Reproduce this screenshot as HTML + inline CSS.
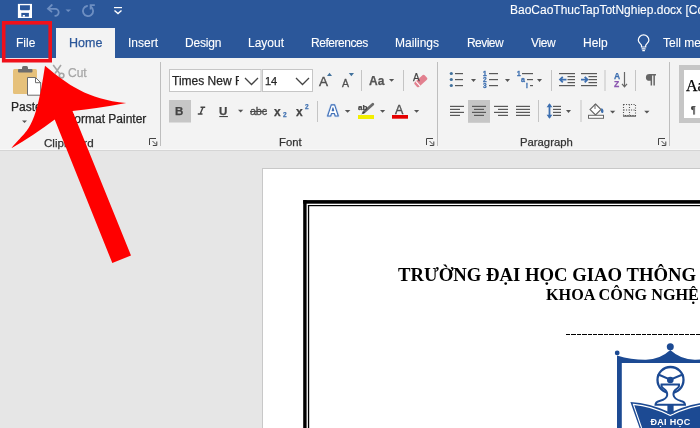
<!DOCTYPE html>
<html><head><meta charset="utf-8">
<style>
*{margin:0;padding:0;box-sizing:border-box}
.t{will-change:transform;-webkit-text-stroke-width:0.25px}
html,body{width:700px;height:428px;overflow:hidden;background:#E6E6E6;position:relative;font-family:"Liberation Sans",sans-serif}
.a{position:absolute}
.t{position:absolute;white-space:nowrap;line-height:1;font-size:12px}
.tab{color:#fff;-webkit-text-stroke-width:0.1px}
.rb{color:#262626}
.sep{position:absolute;width:1px;background:#BEBEBE}
.gl{color:#333;font-size:11.3px}
svg{position:absolute;overflow:visible}
</style></head><body>
<!-- title bar + tabs -->
<div class="a" style="left:0;top:0;width:700px;height:58px;background:#2B579A"></div>
<div class="a" style="left:56px;top:28px;width:59px;height:31px;background:#F3F3F3"></div>
<!-- ribbon -->
<div class="a" style="left:0;top:58px;width:700px;height:92px;background:#F3F3F3"></div>
<div class="a" style="left:0;top:149px;width:700px;height:1px;background:#F8F8F8"></div>
<div class="a" style="left:0;top:150px;width:700px;height:1px;background:#D5D5D5"></div>

<!-- title -->
<div class="t tab" style="left:510px;top:4px">BaoCaoThucTapTotNghiep.docx [Co</div>
<!-- tabs -->
<div class="t tab" style="left:15.5px;top:37px">File</div>
<div class="t" style="left:69px;top:36.7px;color:#2B579A;font-size:12.5px">Home</div>
<div class="t tab" style="left:128px;top:37px">Insert</div>
<div class="t tab" style="left:185px;top:37px;letter-spacing:-0.2px">Design</div>
<div class="t tab" style="left:247.5px;top:37px">Layout</div>
<div class="t tab" style="left:311px;top:37px;letter-spacing:-0.45px">References</div>
<div class="t tab" style="left:395px;top:37px">Mailings</div>
<div class="t tab" style="left:467px;top:37px;letter-spacing:-0.55px">Review</div>
<div class="t tab" style="left:531px;top:37px;letter-spacing:-0.4px">View</div>
<div class="t tab" style="left:582.5px;top:37px">Help</div>
<div class="t tab" style="left:663px;top:37px">Tell me</div>

<!-- ribbon texts -->
<div class="t rb" style="left:11px;top:101px">Paste</div>
<div class="t" style="left:68px;top:67px;color:#A6A6A6">Cut</div>
<div class="t rb" style="left:67px;top:113px">Format Painter</div>
<div class="t gl" style="left:44.3px;top:136.8px;font-size:11.6px">Clipboard</div>
<div class="t gl" style="left:278.5px;top:137px">Font</div>
<div class="t gl" style="left:519.5px;top:137px">Paragraph</div>

<!-- separators -->
<div class="sep" style="left:160px;top:62px;height:84px"></div>
<div class="sep" style="left:437px;top:62px;height:84px"></div>
<div class="sep" style="left:669px;top:62px;height:84px"></div>


<!-- QAT icons -->
<svg width="700" height="60" style="left:0;top:0">
 <rect x="17.9" y="3.9" width="14.1" height="14.1" fill="#fff"/>
 <path d="M20,5.2 H29.9 V9.4 L29.1,10.2 H20.8 L20,9.4 Z" fill="#2B579A"/>
 <rect x="21.3" y="12.9" width="7.6" height="3.8" fill="#2B579A"/>
 <rect x="22.8" y="15" width="2.1" height="1.7" fill="#fff"/>
 <g fill="none" stroke="#6E8FC2" stroke-width="1.8" stroke-linecap="round">
  <path d="M48.6,8.8 H55.2 A3.5,3.5 0 0 1 55.2,15.8"/>
  <path d="M51.8,5 L48,8.6 L51.5,11.6"/>
  <path d="M87.1,6 A5.1,5.1 0 1 0 91.2,7"/>
  <path d="M90.6,9.6 V5.2 H94.8" stroke-linecap="butt"/>
 </g>
 <path d="M65.5,9.5 H71 L68.25,12 Z" fill="#6E8FC2"/>
 <rect x="114" y="7" width="8" height="1.2" fill="#fff"/>
 <path d="M114.5,10.5 L118,13.5 L121.5,10.5" fill="none" stroke="#fff" stroke-width="1.4"/>
 <!-- lightbulb -->
 <g fill="none" stroke="#fff" stroke-width="1.2">
  <path d="M641.5,47 V45.6 C641.5,44 638.3,42.8 638.3,40.2 A5.3,5.3 0 0 1 648.9,40.2 C648.9,42.8 645.7,44 645.7,45.6 V47 Z"/>
  <path d="M641.6,48.8 H645.6 M642.3,50.6 H644.9"/>
 </g>
</svg>

<!-- ribbon icons -->
<svg width="700" height="428" style="left:0;top:0">
 <!-- Paste -->
 <rect x="13" y="69" width="24" height="25" rx="1.5" fill="#E6C17B"/>
 <rect x="18" y="69" width="14.5" height="3.5" rx="1" fill="#6D6D6D"/>
 <rect x="22" y="66" width="6" height="4" rx="1.5" fill="#6D6D6D"/>
 <path d="M27.5,77.5 H35.5 L40.7,82.7 V95.2 H27.5 Z" fill="#fff" stroke="#6D6D6D" stroke-width="1"/>
 <path d="M35.5,77.5 V82.7 H40.7" fill="none" stroke="#6D6D6D" stroke-width="1"/>
 <path d="M22,120.5 H27 L24.5,123 Z" fill="#555"/>
 <!-- scissors -->
 <g fill="none" stroke="#A6A6A6" stroke-width="1.6">
  <path d="M53.2,65 L59.5,73.5 M61,65 L55,73.5"/>
  <circle cx="61.6" cy="75.6" r="2.3"/>
 </g>
 <!-- launcher icons -->
 <g fill="none" stroke="#444" stroke-width="1">
  <path d="M149.5,145 V138.5 H156"/><path d="M152.5,141 L156,144.5 M152.8,145.5 H156.8 V141.5"/>
  <path d="M426.5,145 V138.5 H433"/><path d="M429.5,141 L433,144.5 M429.8,145.5 H433.8 V141.5"/>
  <path d="M658.5,145 V138.5 H665"/><path d="M661.5,141 L665,144.5 M661.8,145.5 H665.8 V141.5"/>
 </g>
 <!-- font boxes -->
 <rect x="169.5" y="69.5" width="91.5" height="22" fill="#fff" stroke="#C6C6C6"/>
 <rect x="262.5" y="69.5" width="50" height="22" fill="#fff" stroke="#C6C6C6"/>
 <g fill="none" stroke="#444" stroke-width="1.3">
  <path d="M245,78 L251.5,84.5 L258,78"/>
  <path d="M296,78 L302.5,84.5 L309,78"/>
 </g>
 <!-- grow/shrink -->
 <path d="M327,76 L329.5,72.8 L332,76 Z" fill="#41719C"/>
 <path d="M348.8,73 H354 L351.4,76.2 Z" fill="#41719C"/>
 <!-- separators small -->
 <g fill="#C4C4C4">
  <rect x="361" y="70" width="1" height="21"/>
  <rect x="403" y="70" width="1" height="21"/>
  <rect x="317" y="101" width="1" height="21"/>
  <rect x="551" y="70" width="1" height="21"/>
  <rect x="604.5" y="70" width="1" height="21"/>
  <rect x="635" y="70" width="1" height="21"/>
  <rect x="538" y="100" width="1" height="22"/>
  <rect x="580.5" y="100" width="1" height="22"/>
 </g>
 <!-- dropdown arrows -->
 <g fill="#555">
  <path d="M389,79 H394.2 L391.6,81.8 Z"/>
  <path d="M238,109.7 H243.3 L240.65,112.6 Z"/>
  <path d="M344.8,110 H350.4 L347.6,112.8 Z"/>
  <path d="M380,110 H385.2 L382.6,112.8 Z"/>
  <path d="M414,110 H419.2 L416.6,112.8 Z"/>
  <path d="M471,79 H476 L473.5,82 Z"/>
  <path d="M505,79 H510 L507.5,82 Z"/>
  <path d="M537,79 H542 L539.5,82 Z"/>
  <path d="M566,110 H571 L568.5,113 Z"/>
  <path d="M610,110.8 H615.3 L612.65,113.5 Z"/>
  <path d="M644.2,110.8 H649.5 L646.85,113.5 Z"/>
 </g>
 <!-- eraser -->
 <g transform="translate(420.8,81) rotate(-42)"><rect x="-6.8" y="-3.1" width="13.6" height="6.2" rx="1.4" fill="#E2808F"/><rect x="-4.4" y="-3.1" width="1.1" height="6.2" fill="#fff"/></g>
 
 <!-- B button -->
 <rect x="169" y="100" width="22" height="22.5" fill="#C6C6C6"/>
 <!-- U underline -->
 <rect x="219.3" y="116" width="8.6" height="1.1" fill="#444"/>
 <!-- subscripts -->
 <!-- highlight -->
 <rect x="358" y="115" width="16" height="4" fill="#F2EE00"/>
 <path d="M363.5,112.5 L372.8,104.2" stroke="#6A6A6A" stroke-width="2.8" stroke-linecap="round"/>
 <path d="M361,114.6 L364,111.4 L365,112.6 Z" fill="#333"/>
 <!-- font color -->
 <rect x="392" y="115" width="16" height="3.7" fill="#E50000"/>
 <!-- bullets -->
 <g fill="#41719C">
  <circle cx="451.3" cy="73.5" r="1.6"/><circle cx="451.3" cy="79.5" r="1.6"/><circle cx="451.3" cy="85.5" r="1.6"/>
 </g>
 <g fill="#595959">
  <rect x="455" y="73" width="8" height="1.2"/><rect x="455" y="79" width="8" height="1.2"/><rect x="455" y="85" width="8" height="1.2"/>
  <rect x="489" y="73" width="9" height="1.2"/><rect x="489" y="79" width="9" height="1.2"/><rect x="489" y="85" width="9" height="1.2"/>
  <rect x="522" y="73" width="11" height="1.2"/><rect x="527" y="79" width="6" height="1.2"/><rect x="530" y="85" width="3" height="1.2"/>
 </g>
 <!-- decrease / increase indent -->
 <g fill="#595959">
  <rect x="559" y="73" width="16" height="1.2"/><rect x="567.5" y="76" width="7.5" height="1.2"/><rect x="567.5" y="79" width="7.5" height="1.2"/><rect x="567.5" y="82" width="7.5" height="1.2"/><rect x="559" y="85" width="16" height="1.2"/>
  <rect x="581" y="73" width="16" height="1.2"/><rect x="588.5" y="76" width="8.5" height="1.2"/><rect x="588.5" y="79" width="8.5" height="1.2"/><rect x="588.5" y="82" width="8.5" height="1.2"/><rect x="581" y="85" width="16" height="1.2"/>
 </g>
 <g fill="none" stroke="#3D6FB0" stroke-width="1.8">
  <path d="M560,79.6 H566.5 M562.8,76.8 L560,79.6 L562.8,82.4"/>
  <path d="M581,79.6 H587.5 M584.7,76.8 L587.5,79.6 L584.7,82.4"/>
 </g>
 <!-- sort arrow -->
 <path d="M624.5,72 V86.5 M622,83.8 L624.5,86.8 L627,83.8" fill="none" stroke="#666" stroke-width="1.2"/>
 <!-- align lines -->
 <rect x="468" y="100" width="22" height="22.8" fill="#C6C6C6"/>
 <g fill="#595959">
  <rect x="450" y="105.8" width="14" height="1.2"/><rect x="450" y="108.8" width="10" height="1.2"/><rect x="450" y="111.8" width="14" height="1.2"/><rect x="450" y="114.8" width="10" height="1.2"/>
  <rect x="472" y="105.8" width="14" height="1.2"/><rect x="474" y="108.8" width="10" height="1.2"/><rect x="472" y="111.8" width="14" height="1.2"/><rect x="474" y="114.8" width="10" height="1.2"/>
  <rect x="494" y="105.8" width="14" height="1.2"/><rect x="498" y="108.8" width="10" height="1.2"/><rect x="494" y="111.8" width="14" height="1.2"/><rect x="498" y="114.8" width="10" height="1.2"/>
  <rect x="516" y="105.8" width="14" height="1.2"/><rect x="516" y="108.8" width="14" height="1.2"/><rect x="516" y="111.8" width="14" height="1.2"/><rect x="516" y="114.8" width="14" height="1.2"/>
  <rect x="553" y="105.8" width="8" height="1.2"/><rect x="553" y="108.8" width="8" height="1.2"/><rect x="553" y="111.8" width="8" height="1.2"/><rect x="553" y="114.8" width="8" height="1.2"/>
 </g>
 <!-- line spacing arrows -->
 <path d="M549.5,104.5 V117.5" stroke="#3D6FB0" stroke-width="1.8"/><path d="M546.6,107.2 L549.5,103.2 L552.4,107.2 Z M546.6,114.8 L549.5,118.8 L552.4,114.8 Z" fill="#3D6FB0"/>
 <!-- shading -->
 <path d="M595.5,104 L601,109.5 L595.5,115 L590,109.5 Z" fill="#fff" stroke="#666" stroke-width="1.1"/>
 <path d="M595,104 V109" stroke="#666" stroke-width="1"/>
 <path d="M601.5,108 Q604.5,110 603,113 Q600.5,113.5 601,110 Z" fill="#3D6FB0"/>
 <rect x="588.5" y="115.3" width="15" height="3" fill="#fff" stroke="#666" stroke-width="1"/>
 <!-- borders -->
 <g stroke="#555" stroke-width="1.1" stroke-dasharray="1.1 1.4" fill="none">
  <rect x="623.5" y="104.5" width="12" height="11"/>
  <path d="M629.5,104.5 V115 M623.5,110 H635.5"/>
 </g>
 <rect x="623" y="115.5" width="13" height="1.2" fill="#555"/>
 <!-- styles gallery -->
 <rect x="679" y="65" width="30" height="58" fill="#C6C6C6"/>
 <rect x="684" y="70" width="30" height="48" fill="#fff"/>
</svg>


<div class="t" style="left:172px;top:75px;font-size:12px;color:#262626;width:67px;overflow:hidden">Times New Roman</div>
<div class="t" style="left:264.6px;top:75.5px;font-size:11px;color:#262626">14</div>
<div class="t" style="left:319px;top:75px;font-size:13.5px;color:#505050;-webkit-text-stroke:0.35px #505050">A</div>
<div class="t" style="left:342px;top:78px;font-size:10.5px;color:#505050;-webkit-text-stroke:0.3px #505050">A</div>
<div class="t" style="left:369px;top:74.5px;font-size:12px;color:#555;font-weight:bold">Aa</div>
<div class="t" style="left:412.8px;top:72.6px;font-size:10px;color:#444">A</div>
<div class="t" style="left:175px;top:105.5px;font-size:11.5px;color:#444;font-weight:bold">B</div>
<div class="t" style="left:219px;top:105.5px;font-size:11.5px;color:#444;font-weight:bold">U</div>
<div class="t" style="left:250px;top:106px;font-size:11px;color:#4a4a4a;letter-spacing:-0.3px;-webkit-text-stroke:0.3px #4a4a4a;text-decoration:line-through">abc</div>
<div class="t" style="left:273.8px;top:105.5px;font-size:12px;color:#444;font-weight:bold">x</div>
<div class="t" style="left:283px;top:111.5px;font-size:6.5px;color:#3D6FB0;font-weight:bold">2</div>
<div class="t" style="left:296.2px;top:105.5px;font-size:12px;color:#444;font-weight:bold">x</div>
<div class="t" style="left:305px;top:103.5px;font-size:6.5px;color:#3D6FB0;font-weight:bold">2</div>
<div class="t" style="left:358px;top:103.6px;font-size:8px;color:#444;font-weight:bold">ab</div>
<div class="t" style="left:395px;top:104px;font-size:12.5px;color:#505050;-webkit-text-stroke:0.35px #505050">A</div>
<div class="t" style="left:483.3px;top:71px;font-size:6.5px;color:#3D6FB0;font-weight:bold;line-height:6px;-webkit-text-stroke:0.3px #3D6FB0">1<br>2<br>3</div>
<div class="t" style="left:516.5px;top:71px;font-size:6.5px;color:#3D6FB0;font-weight:bold;line-height:6px;-webkit-text-stroke:0.3px #3D6FB0">1</div>
<div class="t" style="left:520.8px;top:76.5px;font-size:7px;color:#3D6FB0;font-weight:bold;line-height:6px;-webkit-text-stroke:0.3px #3D6FB0">a</div>
<div class="t" style="left:525.6px;top:82.5px;font-size:6.5px;color:#3D6FB0;font-weight:bold;line-height:6px;-webkit-text-stroke:0.3px #3D6FB0">i</div>
<div class="t" style="left:613.5px;top:71.5px;font-size:8.5px;color:#3D6FB0;font-weight:bold">A</div>
<div class="t" style="left:614px;top:79.5px;font-size:8.5px;color:#8B57B0;font-weight:bold">Z</div>
<div class="t" style="left:686px;top:78px;font-size:16px;color:#000;font-family:'Liberation Serif',serif">Aa</div>
<div class="t" style="left:691px;top:105px;font-size:10px;color:#444;font-family:'Liberation Serif',serif">¶</div>


<svg width="700" height="428" style="left:0;top:0">
 <path d="M200.5,107.2 H205.2 M197.8,114 H202.5 M203,107.2 L200.2,114" fill="none" stroke="#444" stroke-width="1.4"/>
 <path d="M327.6,116 L331.3,104.9 H334.6 L338.3,116 H335.2 L334.4,113.5 H331.5 L330.7,116 Z M332.2,110.6 H333.7 L332.95,107.9 Z" fill="#fff" stroke="#C9DAF2" stroke-width="2.4" stroke-linejoin="round"/>
 <path d="M327.6,116 L331.3,104.9 H334.6 L338.3,116 H335.2 L334.4,113.5 H331.5 L330.7,116 Z M332.2,110.6 H333.7 L332.95,107.9 Z" fill="#fff" stroke="#3F6EB5" stroke-width="1.1" stroke-linejoin="round"/>
</svg>
<svg width="700" height="428" style="left:0;top:0">
 <path d="M656,74 H649.5 A3.6,3.4 0 0 0 649.5,80.8 H650.6 V85.6 H652.1 V75.4 H653.4 V85.6 H654.9 V75.4 H656 Z" fill="#666"/>
</svg>
<!-- document page -->
<div class="a" style="left:262px;top:168px;width:438px;height:260px;background:#fff;border-left:1px solid #C8C8C8;border-top:1px solid #C8C8C8"></div>
<svg width="700" height="428" style="left:0;top:0">
 <rect x="303.2" y="200.1" width="400" height="3.6" fill="#000"/>
 <rect x="303.2" y="200.1" width="3.4" height="300" fill="#000"/>
 <rect x="307.9" y="205" width="400" height="1.2" fill="#000"/>
 <rect x="307.9" y="205" width="1.3" height="300" fill="#000"/>
</svg>


<div class="a" style="left:398px;top:266px;will-change:transform;font-family:'Liberation Serif',serif;font-weight:bold;font-size:18.7px;line-height:1;white-space:nowrap;color:#000">TRƯỜNG ĐẠI HỌC GIAO THÔNG</div>
<div class="a" style="left:546px;top:287px;will-change:transform;font-family:'Liberation Serif',serif;font-weight:bold;font-size:16.2px;line-height:1;white-space:nowrap;color:#000">KHOA CÔNG NGHỆ</div>
<div class="a" style="left:566px;top:334px;width:134px;height:1px;background:repeating-linear-gradient(90deg,#000 0 4.3px,transparent 4.3px 5.4px)"></div>


<!-- logo -->
<svg width="700" height="428" style="left:0;top:0">
 <circle cx="617.2" cy="352.9" r="2.4" fill="#1C4A93"/>
 <circle cx="670.3" cy="346.8" r="3.5" fill="#1C4A93"/>
 <path d="M617,355.5 Q632,360 646,359.8 Q660,359.5 670.3,350 Q680.6,359.5 694.6,359.8 Q705,360 715,356 V363 H621.8 V428 H617 Z" fill="#1C4A93"/>
 <circle cx="670.5" cy="380" r="13" fill="none" stroke="#1C4A93" stroke-width="2.3"/>
 <path d="M657.8,374.2 L670.3,379.6 L683.2,374.2" fill="none" stroke="#1C4A93" stroke-width="2.1"/>
 <circle cx="670.3" cy="380" r="3.3" fill="#1C4A93"/>
 <path d="M630.4,401.9 Q650,402.8 670.3,412.5 Q690.6,402.8 711,401.9 L705,428 H639.6 Z" fill="#1C4A93"/>
 <path d="M641.6,428 L633.4,404.4 Q651,405.6 670.3,415.6 Q689.6,405.6 708,404.4" fill="none" stroke="#fff" stroke-width="1.1"/>
 <rect x="667.4" y="403" width="6.2" height="10.5" fill="#1C4A93"/>
 <path d="M661.5,384.5 H679 Q679.5,387 677,388.5 Q673,391 673.5,395 Q674,399 681,401 Q685,402 685,404.8 H655.5 Q655.5,402 659.5,401 Q667,399 667.2,395 Q667.5,391 663.5,388.5 Q661,387 661.5,384.5 Z" fill="#fff" stroke="#1C4A93" stroke-width="2"/>
 <text x="650.5" y="425" font-family="Liberation Sans" font-weight="bold" font-size="9" fill="#fff" letter-spacing="0.3">ĐẠI HỌC</text>
</svg>

<!-- red rectangle -->
<svg width="700" height="428" style="left:0;top:0"><rect x="3.7" y="22.8" width="46.5" height="37.9" fill="none" stroke="#F0101A" stroke-width="3.6"/></svg>

<!-- arrow -->
<svg width="700" height="428" style="left:0;top:0">
<path d="M45,65.7 C67.98,84.8 87.04,99.06 126.2,103.1 Q98,108.5 72.5,111 L131,255.5 L112.3,263 L54.7,119.6 Q32.95,136.05 11.4,148.3 C27.9,127.86 35.04,132.7 45,65.7 Z" fill="#FF0000"/>
</svg>
</body></html>
